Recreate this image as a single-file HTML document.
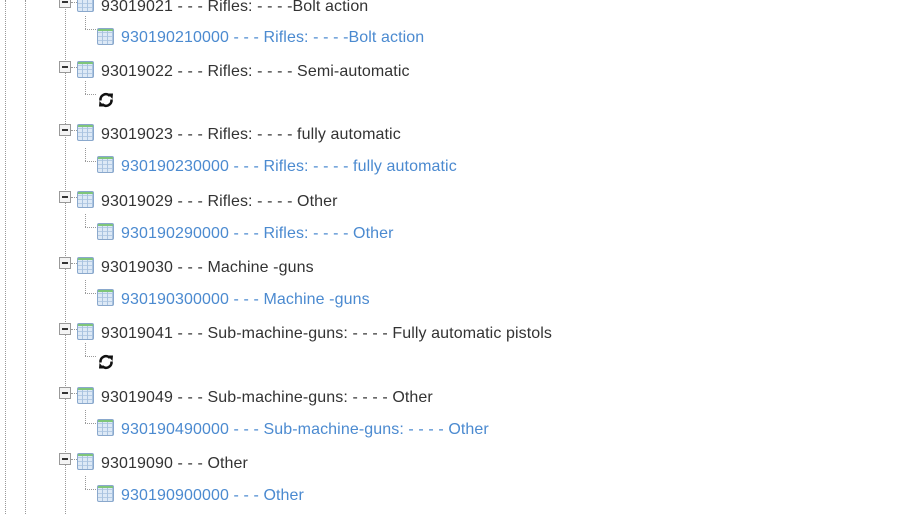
<!DOCTYPE html>
<html><head><style>
body{margin:0;width:905px;height:514px;overflow:hidden;background:#fff;font-family:"Liberation Sans",Arial,sans-serif;font-size:16px;position:relative}
.v{position:absolute;border-left:1px dotted #999;width:0}
.h{position:absolute;border-top:1px dotted #999;height:0}
.exp{position:absolute;width:10px;height:10px;border:1px solid #999;background:#f4f4f4}
.exp:after{content:"";position:absolute;left:2px;top:4px;width:6px;height:2px;background:#333}
.ic{position:absolute;width:15px;height:15px;border:1px solid #8aa8cc;border-radius:2px;background:
linear-gradient(#7fc67a 0 2px,transparent 2px),
repeating-linear-gradient(90deg,transparent 0 4px,#a9c3e0 4px 5px),
repeating-linear-gradient(#dde9f6 0 3px,#b5cbe4 3px 4px)}
.t{position:absolute;color:#333;white-space:nowrap;line-height:18px;margin-top:2px;letter-spacing:0.1px}
.c{color:#4b8ad0}
.r{position:absolute;width:18px;height:18px}
</style></head><body>
<svg width="0" height="0" style="position:absolute"><defs><symbol id="rf" viewBox="0 0 18 18"><path d="M3.5 9.5A5.5 5.5 0 0 1 13 5" fill="none" stroke="#111" stroke-width="2.6"/><path d="M10.5 2.5L16 2.5L15.5 8Z" fill="#111"/><path d="M14.5 8.5A5.5 5.5 0 0 1 5 13" fill="none" stroke="#111" stroke-width="2.6"/><path d="M7.5 15.5L2 15.5L2.5 10Z" fill="#111"/></symbol></defs></svg>
<div class="v" style="left:5px;top:0;height:514px"></div>
<div class="v" style="left:25px;top:0;height:514px"></div>
<div class="v" style="left:65px;top:0;height:514px"></div>

<div class="exp" style="left:59px;top:-4px"></div><div class="h" style="left:71px;top:2px;width:6px"></div><div class="ic" style="left:77px;top:-5px"></div><div class="t" style="left:101px;top:-4px">93019021 - - - Rifles: - - - -Bolt action</div>
<div class="v" style="left:85px;top:16px;height:13px"></div><div class="h" style="left:85px;top:29px;width:11px"></div><div class="ic" style="left:97px;top:28px"></div><div class="t c" style="left:121px;top:27px">930190210000 - - - Rifles: - - - -Bolt action</div>

<div class="exp" style="left:59px;top:61px"></div><div class="h" style="left:71px;top:67px;width:6px"></div><div class="ic" style="left:77px;top:61px"></div><div class="t" style="left:101px;top:61px">93019022 - - - Rifles: - - - - Semi-automatic</div>
<div class="v" style="left:85px;top:81px;height:13px"></div><div class="h" style="left:85px;top:94px;width:11px"></div><svg class="r" style="left:97px;top:91px"><use href="#rf"/></svg>

<div class="exp" style="left:59px;top:124px"></div><div class="h" style="left:71px;top:130px;width:6px"></div><div class="ic" style="left:77px;top:124px"></div><div class="t" style="left:101px;top:124px">93019023 - - - Rifles: - - - - fully automatic</div>
<div class="v" style="left:85px;top:148px;height:13px"></div><div class="h" style="left:85px;top:161px;width:11px"></div><div class="ic" style="left:97px;top:156px"></div><div class="t c" style="left:121px;top:156px">930190230000 - - - Rifles: - - - - fully automatic</div>

<div class="exp" style="left:59px;top:191px"></div><div class="h" style="left:71px;top:197px;width:6px"></div><div class="ic" style="left:77px;top:191px"></div><div class="t" style="left:101px;top:191px">93019029 - - - Rifles: - - - - Other</div>
<div class="v" style="left:85px;top:214px;height:13px"></div><div class="h" style="left:85px;top:227px;width:11px"></div><div class="ic" style="left:97px;top:223px"></div><div class="t c" style="left:121px;top:223px">930190290000 - - - Rifles: - - - - Other</div>

<div class="exp" style="left:59px;top:257px"></div><div class="h" style="left:71px;top:263px;width:6px"></div><div class="ic" style="left:77px;top:257px"></div><div class="t" style="left:101px;top:257px">93019030 - - - Machine -guns</div>
<div class="v" style="left:85px;top:280px;height:13px"></div><div class="h" style="left:85px;top:293px;width:11px"></div><div class="ic" style="left:97px;top:289px"></div><div class="t c" style="left:121px;top:289px">930190300000 - - - Machine -guns</div>

<div class="exp" style="left:59px;top:323px"></div><div class="h" style="left:71px;top:329px;width:6px"></div><div class="ic" style="left:77px;top:323px"></div><div class="t" style="left:101px;top:323px">93019041 - - - Sub-machine-guns: - - - - Fully automatic pistols</div>
<div class="v" style="left:85px;top:343px;height:13px"></div><div class="h" style="left:85px;top:356px;width:11px"></div><svg class="r" style="left:97px;top:353px"><use href="#rf"/></svg>

<div class="exp" style="left:59px;top:387px"></div><div class="h" style="left:71px;top:393px;width:6px"></div><div class="ic" style="left:77px;top:387px"></div><div class="t" style="left:101px;top:387px">93019049 - - - Sub-machine-guns: - - - - Other</div>
<div class="v" style="left:85px;top:410px;height:13px"></div><div class="h" style="left:85px;top:423px;width:11px"></div><div class="ic" style="left:97px;top:419px"></div><div class="t c" style="left:121px;top:419px">930190490000 - - - Sub-machine-guns: - - - - Other</div>

<div class="exp" style="left:59px;top:453px"></div><div class="h" style="left:71px;top:459px;width:6px"></div><div class="ic" style="left:77px;top:453px"></div><div class="t" style="left:101px;top:453px">93019090 - - - Other</div>
<div class="v" style="left:85px;top:476px;height:13px"></div><div class="h" style="left:85px;top:489px;width:11px"></div><div class="ic" style="left:97px;top:485px"></div><div class="t c" style="left:121px;top:485px">930190900000 - - - Other</div>
</body></html>
